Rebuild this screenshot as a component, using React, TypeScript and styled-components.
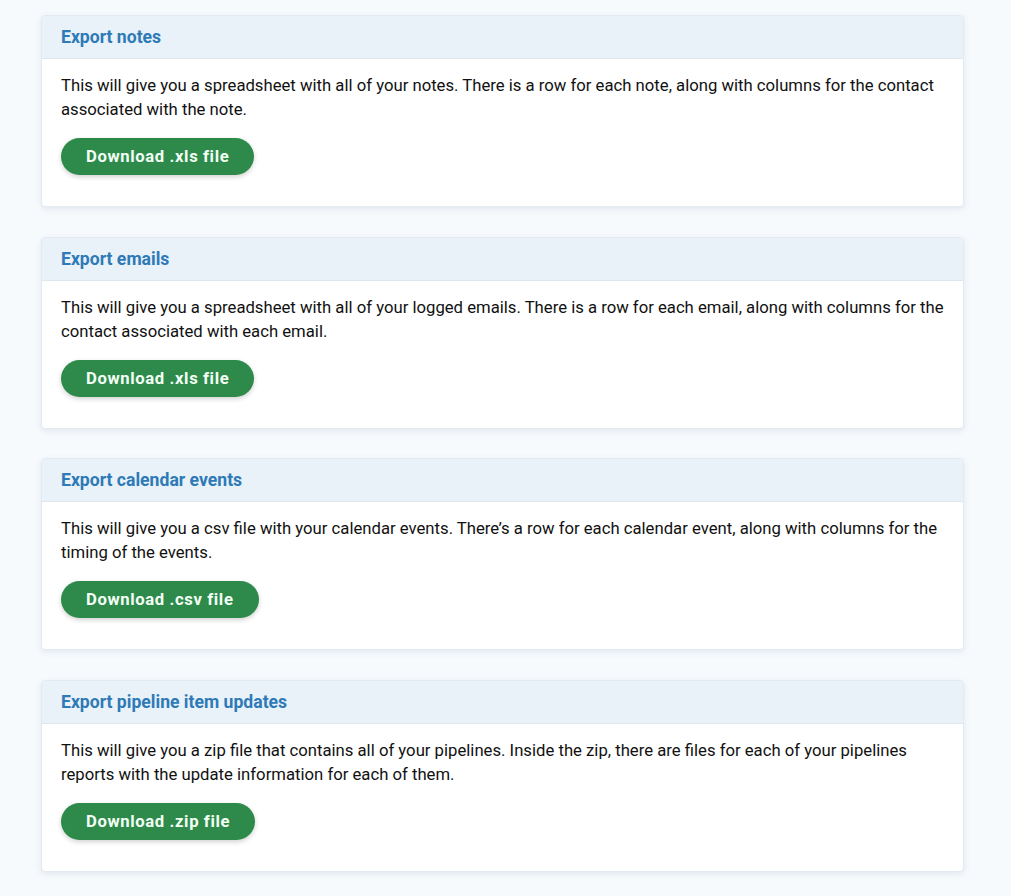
import React from 'react';
import styled, { createGlobalStyle } from 'styled-components';

const GlobalStyle = createGlobalStyle`
  html, body {
    margin: 0;
    padding: 0;
    background: #f7fafd;
    font-family: Roboto, "Liberation Sans", sans-serif;
    color: #1a1a1a;
  }
`;

const Page = styled.main`
  display: flex;
  flex-direction: column;
  gap: 29.7px;
  padding: 15px 0 26px 41px;
`;

const Card = styled.section`
  width: 923px;
  background: #ffffff;
  border: 1px solid #e3eaf1;
  border-radius: 4px;
  box-shadow: 0 2px 6px rgba(40, 70, 110, 0.1);
  overflow: hidden;
  box-sizing: border-box;
`;

const Header = styled.header`
  height: 42px;
  display: flex;
  align-items: center;
  padding: 0 19px;
  background: #e9f1f9;
  border-bottom: 1px solid #dde7f0;
`;

const Title = styled.h2`
  margin: 0;
  font-size: 17.6px;
  font-weight: 700;
  color: #2e7ab6;
`;

const Body = styled.div`
  padding: 15px 19px 31px;
`;

const Description = styled.p`
  margin: 0;
  font-size: 16.7px;
  line-height: 24px;
  color: #111;
`;

const Button = styled.button`
  margin-top: 16px;
  height: 37px;
  padding: 0 25px;
  border: none;
  border-radius: 19px;
  background: #2d8a4a;
  color: #f2fff5;
  font-family: Roboto, "Liberation Sans", sans-serif;
  font-size: 16.7px;
  font-weight: 700;
  letter-spacing: 0.6px;
  box-shadow: 0 2px 5px rgba(0, 0, 0, 0.18);
  cursor: pointer;
`;

const exports = [
  {
    title: 'Export notes',
    text: 'This will give you a spreadsheet with all of your notes. There is a row for each note, along with columns for the contact associated with the note.',
    button: 'Download .xls file',
  },
  {
    title: 'Export emails',
    text: 'This will give you a spreadsheet with all of your logged emails. There is a row for each email, along with columns for the contact associated with each email.',
    button: 'Download .xls file',
  },
  {
    title: 'Export calendar events',
    text: 'This will give you a csv file with your calendar events. There\u2019s a row for each calendar event, along with columns for the timing of the events.',
    button: 'Download .csv file',
  },
  {
    title: 'Export pipeline item updates',
    text: 'This will give you a zip file that contains all of your pipelines. Inside the zip, there are files for each of your pipelines reports with the update information for each of them.',
    button: 'Download .zip file',
  },
];

export default function App() {
  return (
    <>
      <GlobalStyle />
      <Page>
        {exports.map((item) => (
          <Card key={item.title}>
            <Header>
              <Title>{item.title}</Title>
            </Header>
            <Body>
              <Description>{item.text}</Description>
              <Button>{item.button}</Button>
            </Body>
          </Card>
        ))}
      </Page>
    </>
  );
}
